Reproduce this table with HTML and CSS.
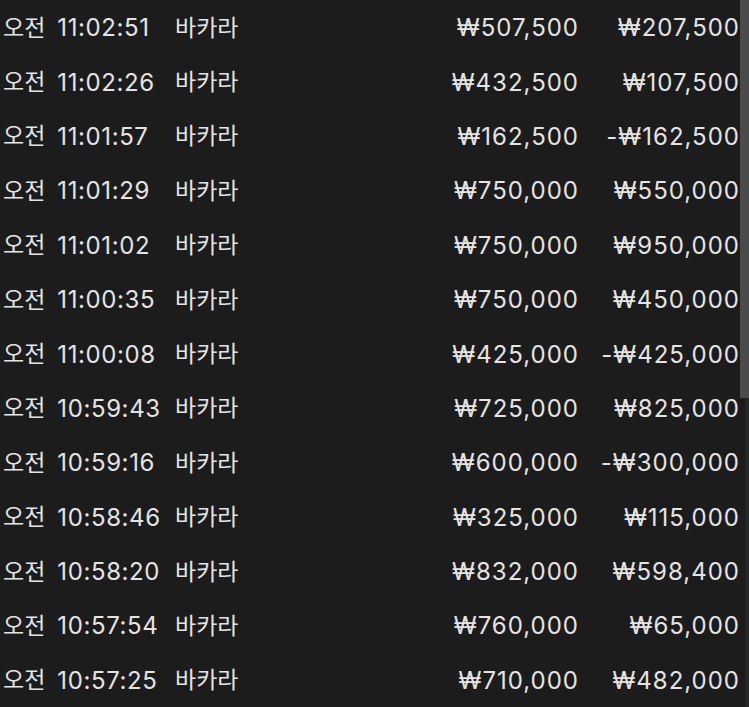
FILE: index.html
```html
<!DOCTYPE html>
<html lang="ko">
<head>
<meta charset="utf-8">
<link rel="stylesheet" href="styles.css">
</head>
<body>
<div class="screen">
  <ul class="list">
    <li class="row"><span class="time"><span class="ampm">오전</span><span class="clock">11:02:51</span></span><span class="game">바카라</span><span class="amt">₩507,500</span><span class="amt">₩207,500</span></li>
    <li class="row"><span class="time"><span class="ampm">오전</span><span class="clock">11:02:26</span></span><span class="game">바카라</span><span class="amt">₩432,500</span><span class="amt">₩107,500</span></li>
    <li class="row"><span class="time"><span class="ampm">오전</span><span class="clock">11:01:57</span></span><span class="game">바카라</span><span class="amt">₩162,500</span><span class="amt">-₩162,500</span></li>
    <li class="row"><span class="time"><span class="ampm">오전</span><span class="clock">11:01:29</span></span><span class="game">바카라</span><span class="amt">₩750,000</span><span class="amt">₩550,000</span></li>
    <li class="row"><span class="time"><span class="ampm">오전</span><span class="clock">11:01:02</span></span><span class="game">바카라</span><span class="amt">₩750,000</span><span class="amt">₩950,000</span></li>
    <li class="row"><span class="time"><span class="ampm">오전</span><span class="clock">11:00:35</span></span><span class="game">바카라</span><span class="amt">₩750,000</span><span class="amt">₩450,000</span></li>
    <li class="row"><span class="time"><span class="ampm">오전</span><span class="clock">11:00:08</span></span><span class="game">바카라</span><span class="amt">₩425,000</span><span class="amt">-₩425,000</span></li>
    <li class="row"><span class="time"><span class="ampm">오전</span><span class="clock">10:59:43</span></span><span class="game">바카라</span><span class="amt">₩725,000</span><span class="amt">₩825,000</span></li>
    <li class="row"><span class="time"><span class="ampm">오전</span><span class="clock">10:59:16</span></span><span class="game">바카라</span><span class="amt">₩600,000</span><span class="amt">-₩300,000</span></li>
    <li class="row"><span class="time"><span class="ampm">오전</span><span class="clock">10:58:46</span></span><span class="game">바카라</span><span class="amt">₩325,000</span><span class="amt">₩115,000</span></li>
    <li class="row"><span class="time"><span class="ampm">오전</span><span class="clock">10:58:20</span></span><span class="game">바카라</span><span class="amt">₩832,000</span><span class="amt">₩598,400</span></li>
    <li class="row"><span class="time"><span class="ampm">오전</span><span class="clock">10:57:54</span></span><span class="game">바카라</span><span class="amt">₩760,000</span><span class="amt">₩65,000</span></li>
    <li class="row"><span class="time"><span class="ampm">오전</span><span class="clock">10:57:25</span></span><span class="game">바카라</span><span class="amt">₩710,000</span><span class="amt">₩482,000</span></li>
  </ul>
  <div class="scrollbar"><div class="thumb"></div></div>
</div>
</body>
</html>
```
FILE: styles.css
```css
html, body {
  margin: 0;
  padding: 0;
  background: #1c1c1c;
}
body {
  width: 749px;
  height: 707px;
  overflow: hidden;
  font-family: Inter, "Noto Sans CJK KR", sans-serif;
  color: #e4e4e4;
}
.screen {
  position: relative;
  width: 749px;
  height: 707px;
}
.list {
  list-style: none;
  margin: 0;
  padding: 1px 10px 0 3px;
}
.row {
  display: grid;
  grid-template-columns: 172px 1fr 160px 161px;
  align-items: center;
  height: 54.4px;
  font-size: 23px;
  line-height: 1;
}
.time {
  display: flex;
  align-items: center;
  gap: 12px;
}
.clock {
  font-size: 24px;
  letter-spacing: 0.6px;
}
.amt {
  text-align: right;
  font-size: 24px;
  letter-spacing: 1px;
  margin-right: -1px;
}
.scrollbar {
  position: absolute;
  top: 0;
  right: 0;
  width: 4px;
  height: 707px;
  background: #262626;
}
.thumb {
  position: absolute;
  top: 0;
  right: 0;
  width: 9px;
  height: 398px;
  background: #4b4b4b;
}
```
